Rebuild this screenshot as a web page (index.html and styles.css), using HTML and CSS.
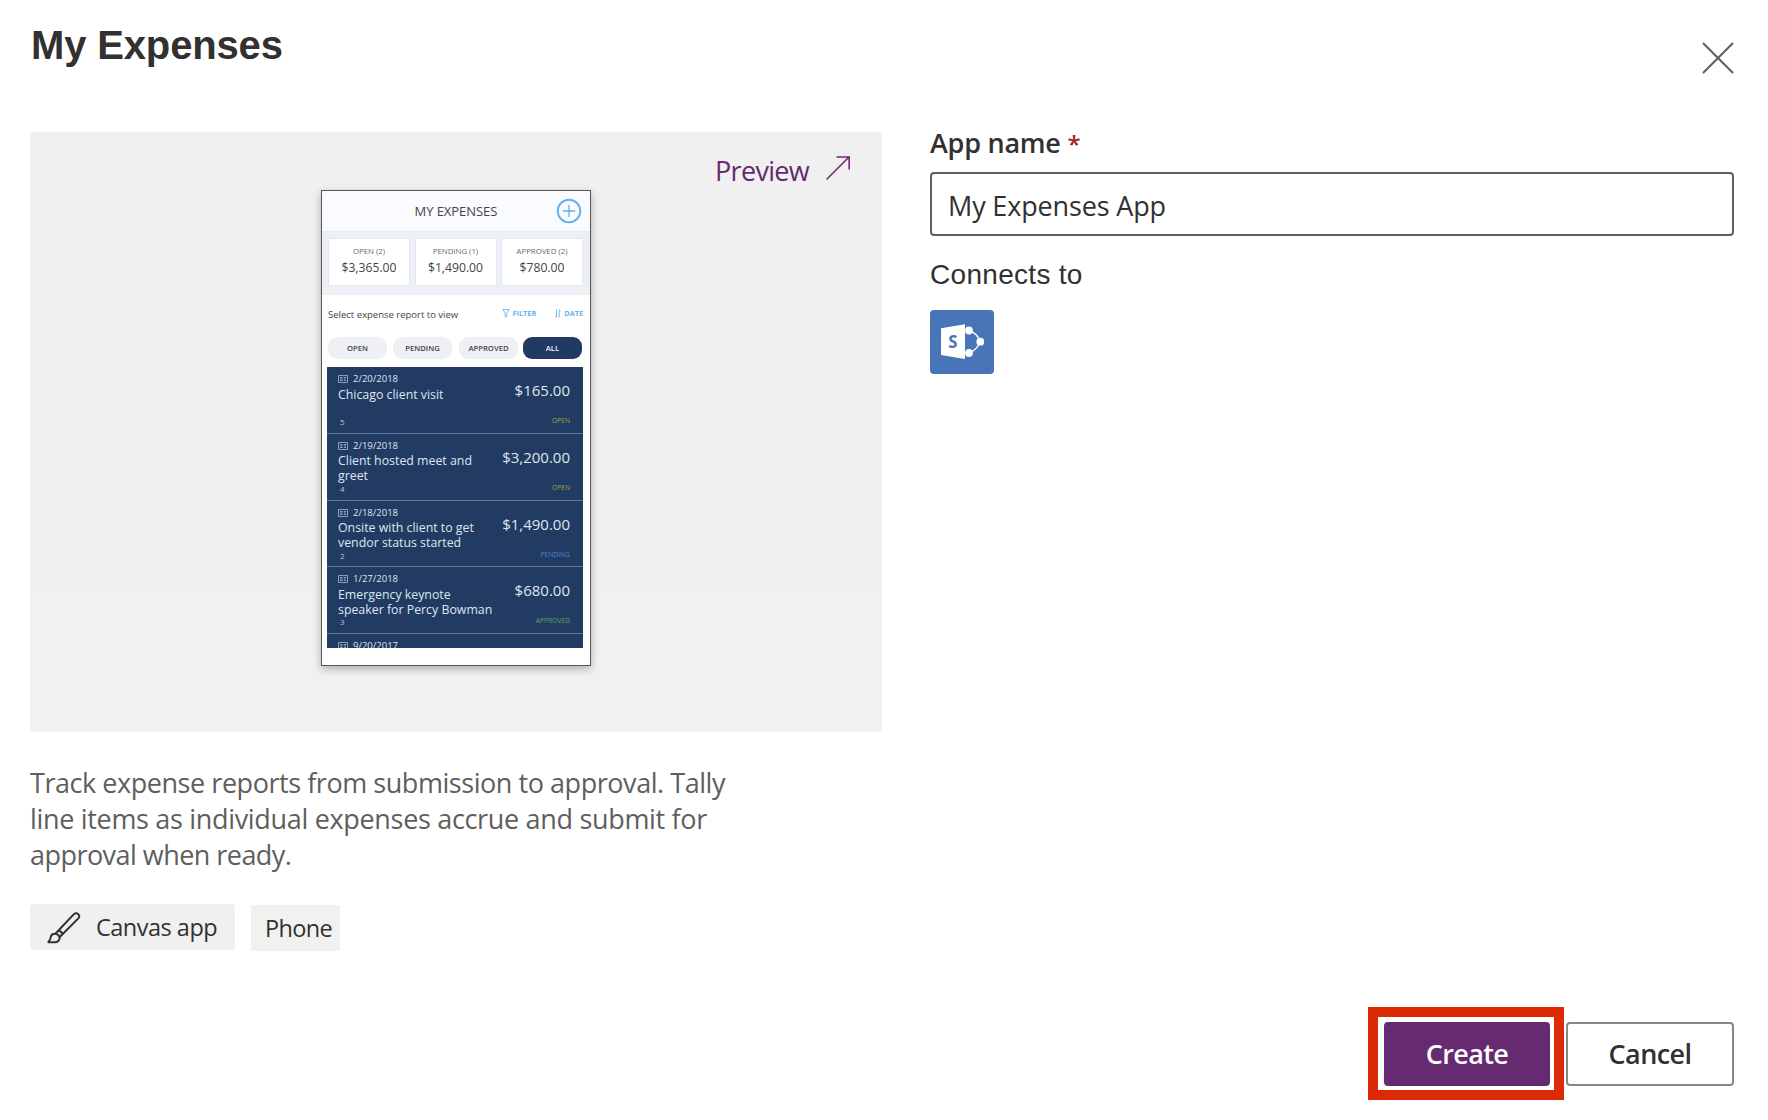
FILE: index.html
```html
<!DOCTYPE html>
<html lang="en">
<head>
<meta charset="utf-8">
<title>My Expenses</title>
<link rel="stylesheet" href="styles.css">
</head>
<body>
<div class="dialog">
  <header class="dialog-header">
    <h1 class="title">My Expenses</h1>
    <button class="close" aria-label="Close"><svg width="32" height="32" viewBox="0 0 32 32"><path d="M1 1 31 31M31 1 1 31"/></svg></button>
  </header>
  <main class="columns">
    <section class="left">
      <div class="preview-panel">
        <a class="preview-link"><span>Preview</span><svg width="26" height="26" viewBox="0 0 26 26"><path d="M1.500 24.500 24 2M11.500 2H24.200V14.500"/></svg></a>
        <div class="phone">
          <div class="phone-head">
            <span>MY EXPENSES</span>
            <svg class="add" width="26" height="26" viewBox="0 0 26 26"><circle cx="13" cy="13" r="11.300"/><path d="M13 7v12M7 13h12"/></svg>
          </div>
          <div class="stats">
            <div class="stat"><span class="stat-label">OPEN (2)</span><span class="stat-value">$3,365.00</span></div>
            <div class="stat"><span class="stat-label">PENDING (1)</span><span class="stat-value">$1,490.00</span></div>
            <div class="stat"><span class="stat-label">APPROVED (2)</span><span class="stat-value">$780.00</span></div>
          </div>
          <div class="toolbar">
            <span class="hint">Select expense report to view</span>
            <svg class="i-filter" width="8" height="9" viewBox="0 0 8 9"><path d="M.8.6H7.200L4.900 4V7.200L3.200 8.400V4z"/></svg>
            <span class="tool filter">FILTER</span>
            <svg class="i-date" width="6" height="9" viewBox="0 0 6 9"><path d="M1.500.5V8M.3 7 1.500 8.300M4.200 8.500V.8L5.600 2"/></svg>
            <span class="tool">DATE</span>
          </div>
          <div class="pills">
            <span class="pill">OPEN</span><span class="pill">PENDING</span><span class="pill">APPROVED</span><span class="pill active">ALL</span>
          </div>
          <div class="list">
            <article class="row">
              <div class="date"><svg width="10" height="8" viewBox="0 0 10 8"><path d="M.5.5h9v7h-9zM2 2.500h2.500M2 4h2.500M2 5.500h2.500M5.800 2.500h2.200M5.800 4h2.200M5.800 5.500h2.200"/></svg><span>2/20/2018</span></div>
              <div class="name">Chicago client visit</div><div class="count">5</div>
              <div class="amount">$165.00</div><div class="status open">OPEN</div>
            </article>
            <article class="row">
              <div class="date"><svg width="10" height="8" viewBox="0 0 10 8"><path d="M.5.5h9v7h-9zM2 2.500h2.500M2 4h2.500M2 5.500h2.500M5.800 2.500h2.200M5.800 4h2.200M5.800 5.500h2.200"/></svg><span>2/19/2018</span></div>
              <div class="name">Client hosted meet and<br>greet</div><div class="count">4</div>
              <div class="amount">$3,200.00</div><div class="status open">OPEN</div>
            </article>
            <article class="row">
              <div class="date"><svg width="10" height="8" viewBox="0 0 10 8"><path d="M.5.5h9v7h-9zM2 2.500h2.500M2 4h2.500M2 5.500h2.500M5.800 2.500h2.200M5.800 4h2.200M5.800 5.500h2.200"/></svg><span>2/18/2018</span></div>
              <div class="name">Onsite with client to get<br>vendor status started</div><div class="count">2</div>
              <div class="amount">$1,490.00</div><div class="status pending">PENDING</div>
            </article>
            <article class="row">
              <div class="date"><svg width="10" height="8" viewBox="0 0 10 8"><path d="M.5.5h9v7h-9zM2 2.500h2.500M2 4h2.500M2 5.500h2.500M5.800 2.500h2.200M5.800 4h2.200M5.800 5.500h2.200"/></svg><span>1/27/2018</span></div>
              <div class="name">Emergency keynote<br>speaker for Percy Bowman</div><div class="count">3</div>
              <div class="amount">$680.00</div><div class="status approved">APPROVED</div>
            </article>
            <article class="row">
              <div class="date"><svg width="10" height="8" viewBox="0 0 10 8"><path d="M.5.5h9v7h-9zM2 2.500h2.500M2 4h2.500M2 5.500h2.500M5.800 2.500h2.200M5.800 4h2.200M5.800 5.500h2.200"/></svg><span>9/20/2017</span></div>
            </article>
          </div>
        </div>
      </div>
      <p class="description"><span class="line-1">Track expense reports from submission to approval. Tally</span><br><span class="line-2">line items as individual expenses accrue and submit for</span><br><span class="line-3">approval when ready.</span></p>
      <div class="tags">
        <span class="tag canvas"><svg width="34" height="33" viewBox="0 0 34 33"><path d="M11.200 19.800 26.700 3.400C29.800.6 34.300 4.200 31.300 7.400L15.500 23.300M11.200 19.800C13.200 20 15 21.500 15.500 23.300M11.200 19.800 8.300 22.700M15.500 23.300 12.600 26.200M8.300 22.700C5.200 22.600 3.800 24.300 3.500 27.200 3.400 28.600 2.700 29.600 1.500 30.500V31.300H7.800C11 31.300 12.900 28.900 12.600 26.200 12 24.300 10.500 22.900 8.300 22.700z"/></svg><span>Canvas app</span></span>
        <span class="tag phone-tag">Phone</span>
      </div>
    </section>
    <section class="right">
      <label class="label" for="app-name">App name <span class="required">*</span></label>
      <input class="field" id="app-name" value="My Expenses App">
      <div class="connects">Connects to</div>
      <div class="connector">
        <svg width="64" height="64" viewBox="0 0 64 64"><path class="thin" d="M39 21Q48 23 50 32M39 43Q47 40 50 32"/><path class="solid" d="M11 18.300 35 14.300V49L11 45z"/><circle class="solid" cx="39" cy="20.500" r="3.900"/><circle class="solid" cx="50.300" cy="31.700" r="3.900"/><circle class="solid" cx="39" cy="43" r="3.900"/><text x="18.300" y="38.200" textLength="9.200" lengthAdjust="spacingAndGlyphs">S</text></svg>
      </div>
    </section>
  </main>
  <footer class="actions">
    <div class="highlight"><button class="btn primary">Create</button></div>
    <button class="btn">Cancel</button>
  </footer>
</div>
</body>
</html>
```
FILE: styles.css
```css
* { box-sizing: border-box; }
body { margin: 0; background: #fff; color: #323130; font-family: "Open Sans", "Noto Sans", sans-serif; }
button { font: inherit; color: inherit; background: none; border: 0; padding: 0; }
svg { display: block; fill: none; flex: none; }
.dialog { width: 1768px; height: 1120px; padding: 0 34px 20px 30px; display: flex; flex-direction: column; }
.dialog-header { height: 132px; display: flex; justify-content: space-between; }
.title { margin: 22px 0 0 1px; font: bold 40px/46px "Liberation Sans", sans-serif; letter-spacing: -.15px; }
.close { width: 32px; height: 32px; margin-top: 42px; }
.close svg { stroke: #605e5c; stroke-width: 2; }
.columns { display: grid; grid-template-columns: 852px 804px; gap: 48px; }
.preview-panel { height: 600px; background: linear-gradient(#f0f0f0 77%, #f1f1ef 77%); display: flex; flex-direction: column; }
.preview-link { align-self: flex-end; height: 58px; display: flex; align-items: flex-start; gap: 16px; padding: 20px 31px 0 0; font-size: 27px; line-height: 38px; color: #652a6f; letter-spacing: -.7px; }
.preview-link svg { stroke: #742774; stroke-width: 1.600; margin-top: 3px; }
.phone { width: 270px; height: 476px; margin-left: 291px; background: #fff; border: 1px solid #555; box-shadow: 0 3px 8px rgba(0,0,0,.28); color: #444; }
.phone-head { height: 41px; background: #fafbfe; border-bottom: 1px solid #e6ecf3; display: grid; grid-template-columns: 1fr 26px; align-items: center; padding: 0 8px 0 0; font-size: 13px; }
.phone-head span { padding-left: 92.500px; letter-spacing: -.05px; }
.add { stroke: #62b0ee; stroke-width: 1.900; }
.add path { stroke-width: 1.300; }
.stats { height: 63px; background: #edf1f5; padding: 6px 7px 9px 6px; display: flex; justify-content: space-between; }
.stat { width: 82px; background: #fff; border: 1px solid #e1e8ef; display: flex; flex-direction: column; align-items: center; padding-top: 7px; }
.stat-label { font-size: 7.800px; line-height: 11px; color: #5d6c78; font-weight: 500; }
.stat-value { font-size: 12.200px; line-height: 21px; }
.toolbar { height: 42px; display: flex; align-items: center; padding: 0 7px 4px 6px; }
.hint { font-size: 9.500px; flex: 1; }
.tool { font-size: 7.300px; line-height: 10px; padding-bottom: 2px; font-weight: 700; color: #68b5f0; }
.toolbar svg { stroke: #68b5f0; stroke-width: .9; margin-bottom: 2px; }
.toolbar .i-filter { margin-right: 3px; }
.toolbar .i-date { margin-right: 3px; margin-left: 19px; }
.pills { height: 22px; display: flex; gap: 6px; padding-left: 6px; }
.pill { width: 59px; height: 22px; border-radius: 9px; background: #eef0f4; font-size: 7.700px; line-height: 22px; font-weight: 600; text-align: center; }
.pill:nth-child(3) { margin: 0 -1px 0 1px; }
.pill.active { background: #213963; color: #eef2f8; }
.list { width: 256px; height: 281px; margin: 8px 0 0 5px; overflow: hidden; background: #223b63; color: #dfe6ef; }
.row { height: 66.800px; border-bottom: 1px solid #5c7b95; padding: 7px 13px 0 11px; display: grid; grid-template-columns: 160px 1fr; grid-template-rows: 10px 32px 12px; white-space: nowrap; }
.date { grid-area: 1 / 1; display: flex; align-items: center; gap: 5px; font-size: 9.500px; line-height: 10px; }
.date svg { stroke: #a9b9cb; stroke-width: .8; }
.name { grid-area: 2 / 1; font-size: 12.350px; line-height: 14.800px; padding-top: 3.500px; }
.count { grid-area: 3 / 1; font-size: 8px; line-height: 10px; padding: 1px 0 0 2px; color: #b9c6d6; }
.amount { grid-area: 1 / 2 / 3 / 3; font-size: 15px; line-height: 20px; padding-top: 6px; justify-self: end; }
.status { grid-area: 3 / 2; font-size: 6.700px; line-height: 10px; justify-self: end; }
.status.open { color: #a3a52e; }
.status.pending { color: #4c87cf; }
.status.approved { color: #59a65a; }
.description { margin: 33px 0 0; font-size: 27px; line-height: 36px; color: #605e5c; white-space: nowrap; }
.line-1 { letter-spacing: -.45px; }
.line-2 { letter-spacing: -.32px; }
.line-3 { letter-spacing: -.54px; }
.tags { display: flex; gap: 16px; margin-top: 31px; font-size: 23.500px; line-height: 46px; }
.tag { height: 46px; }
.canvas { width: 205px; background: #f0f0f0; border-radius: 4px; display: flex; align-items: center; gap: 15px; padding-left: 17px; letter-spacing: -.5px; }
.canvas svg { stroke: #323130; stroke-width: 2; stroke-linejoin: round; }
.phone-tag { width: 89px; margin-top: 1px; background: #f1f1ef; padding-left: 14px; letter-spacing: -.65px; }
.label { display: block; font-size: 27px; line-height: 36px; font-weight: 600; height: 47px; margin-top: -7px; letter-spacing: -.25px; }
.required { color: #a4262c; font-size: 24px; }
.field { display: block; width: 100%; height: 64px; border: 2px solid #605e5c; border-radius: 4px; padding: 2px 16px 0; font: inherit; font-size: 27px; letter-spacing: -.15px; color: inherit; background: #fff; }
.connects { margin-top: 20px; font: 28px/38px "Liberation Sans", sans-serif; letter-spacing: .3px; }
.connector { width: 64px; height: 64px; margin-top: 16px; background: #4874b8; border-radius: 4px; }
.solid { fill: #fff; }
.thin { stroke: #fff; stroke-width: 1.300; }
.connector text { fill: #4874b8; font: bold 17.500px "Open Sans", sans-serif; }
.actions { margin-top: auto; display: flex; justify-content: flex-end; gap: 2px; }
.highlight { width: 196px; height: 93px; border: 10px solid #dc2a04; padding: 5px 4px 4px 6px; }
.btn { width: 168px; height: 64px; margin-top: 15px; border: 2px solid #8a8886; border-radius: 4px; font-size: 27px; line-height: 58px; font-weight: 600; letter-spacing: -.6px; }
.btn.primary { width: 166px; margin: 0; border-color: #652a6f; background: #652a6f; color: #fff; }
```
